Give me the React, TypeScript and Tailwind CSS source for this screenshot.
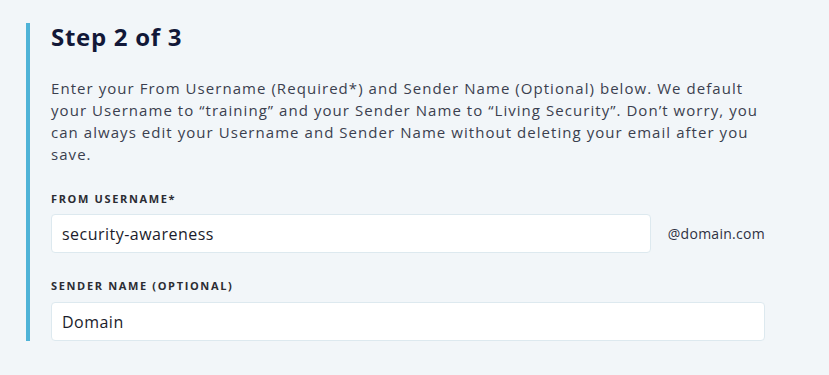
export default function App() {
  return (
    <div className="min-h-[375px] w-full bg-[#f2f6f9] pl-[26px] pt-[23px] font-['Open_Sans',sans-serif]">
      <section className="border-l-4 border-[#4fb3d7] pl-[21px] w-[739px]">
        <h2 className="text-[24px] leading-[28px] font-bold tracking-[0.03em] text-[#121838]">Step 2 of 3</h2>

        <p className="mt-[26px] text-[15px] leading-[22px] tracking-[0.07em] text-[#3b3f4f]">
          Enter your From Username (Required*) and Sender Name (Optional) below. We default
          your Username to “training” and your Sender Name to “Living Security”. Don’t worry, you
          can always edit your Username and Sender Name without deleting your email after you
          save.
        </p>

        {/* username + fixed domain */}
        <label className="block mt-[26px] text-[11px] leading-[16px] font-bold tracking-[0.15em] text-[#2b2c33]">
          FROM USERNAME*
        </label>
        <div className="mt-[7px] flex items-center gap-[17px]">
          <input
            defaultValue="security-awareness"
            className="h-[39px] flex-1 rounded-[4px] border border-[#dde9ef] bg-white px-[10px] text-[16px] tracking-[0.03em] text-[#1b1c2b] outline-none"
          />
          <span className="text-[14px] tracking-[0.02em] text-[#2f3142]">@domain.com</span>
        </div>

        <label className="block mt-[25px] text-[11px] leading-[16px] font-bold tracking-[0.15em] text-[#2b2c33]">
          SENDER NAME (OPTIONAL)
        </label>
        <input
          defaultValue="Domain"
          className="mt-[8px] block h-[39px] w-full rounded-[4px] border border-[#dde9ef] bg-white px-[10px] text-[16px] tracking-[0.03em] text-[#1b1c2b] outline-none"
        />
      </section>
    </div>
  );
}
